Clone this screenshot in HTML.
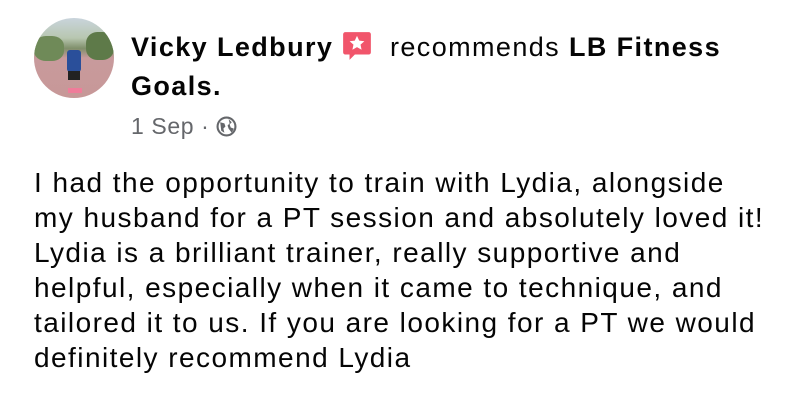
<!DOCTYPE html>
<html><head><meta charset="utf-8"><style>
html,body{margin:0;padding:0;background:#fff;width:791px;height:418px;overflow:hidden;font-family:"Liberation Sans",sans-serif;color:#050505}
.av{position:absolute;left:34px;top:18px;width:80px;height:80px;border-radius:50%;overflow:hidden;background:linear-gradient(#c9d4dc 0,#b8c7b0 25%,#7f8f6a 38%,#c89a9c 50%,#c79898 100%)}
.h{position:absolute;left:131px;font-size:27px;letter-spacing:1.4px;font-weight:bold;white-space:nowrap}
.n{font-weight:normal}
.d{position:absolute;left:131px;top:113px;font-size:23px;letter-spacing:0.6px;color:#65676b}
.b{position:absolute;left:34px;top:165px;font-size:28px;letter-spacing:1.45px;line-height:35px;white-space:nowrap}
</style></head><body>
<div class="av">
<div style="position:absolute;left:0;top:18px;width:30px;height:25px;background:#6f8a58;border-radius:40%"></div>
<div style="position:absolute;right:0;top:14px;width:28px;height:28px;background:#5e7a49;border-radius:40%"></div>
<div style="position:absolute;left:33px;top:32px;width:14px;height:22px;background:#2a4f9a;border-radius:3px"></div>
<div style="position:absolute;left:34px;top:53px;width:12px;height:9px;background:#222"></div>
<div style="position:absolute;left:34px;top:70px;width:14px;height:5px;background:#f07c9a"></div>
</div>
<div class="h" style="top:30px">Vicky Ledbury <svg width="30" height="32" viewBox="0 0 28 30" style="vertical-align:-6px"><path d="M3 2h22a2 2 0 0 1 2 2v17a2 2 0 0 1-2 2H12l-5 5v-5H3a2 2 0 0 1-2-2V4a2 2 0 0 1 2-2z" fill="#f1556b"/><path d="M14 5.5l2.1 4.5 4.8.5-3.6 3.2 1 4.8-4.3-2.5-4.3 2.5 1-4.8-3.6-3.2 4.8-.5z" fill="#fff"/></svg>&nbsp; <span class="n">recommends</span> LB Fitness</div>
<div class="h" style="top:71px">Goals.</div>
<div class="d">1 Sep · <svg width="21" height="21" viewBox="0 0 20 20" style="vertical-align:-3px"><circle cx="10" cy="10" r="8.5" fill="none" stroke="#65676b" stroke-width="2"/><path d="M4 6l4 1 1 3-2 2 1 4-3-2zM12 3l3 3-2 2 1 3 3 1-2 4-3-4-1-3 2-2z" fill="#65676b"/></svg></div>
<div class="b">I had the opportunity to train with Lydia, alongside<br>my husband for a PT session and absolutely loved it!<br>Lydia is a brilliant trainer, really supportive and<br>helpful, especially when it came to technique, and<br>tailored it to us. If you are looking for a PT we would<br>definitely recommend Lydia</div>
</body></html>
